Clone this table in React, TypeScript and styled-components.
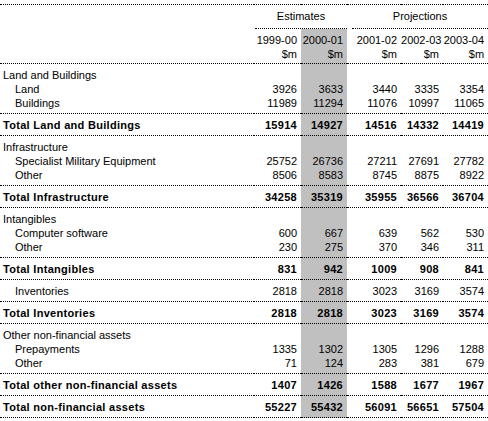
import React from 'react';
import styled, { createGlobalStyle } from 'styled-components';

const GlobalStyle = createGlobalStyle`
  html, body {
    margin: 0;
    padding: 0;
    background: #ffffff;
  }
  body {
    font-family: Tahoma, "Liberation Sans", Arial, sans-serif;
    font-size: 11px;
    color: #000000;
  }
`;

const SHADE = '#c0c0c0';
const RULE = '1px dotted #000000';

type Values = number[];

interface Group {
  heading?: string;
  items: { label: string; values: Values }[];
  total: { label: string; values: Values };
}

const groups: Group[] = [
  {
    heading: 'Land and Buildings',
    items: [
      { label: 'Land', values: [3926, 3633, 3440, 3335, 3354] },
      { label: 'Buildings', values: [11989, 11294, 11076, 10997, 11065] },
    ],
    total: { label: 'Total Land and Buildings', values: [15914, 14927, 14516, 14332, 14419] },
  },
  {
    heading: 'Infrastructure',
    items: [
      { label: 'Specialist Military Equipment', values: [25752, 26736, 27211, 27691, 27782] },
      { label: 'Other', values: [8506, 8583, 8745, 8875, 8922] },
    ],
    total: { label: 'Total Infrastructure', values: [34258, 35319, 35955, 36566, 36704] },
  },
  {
    heading: 'Intangibles',
    items: [
      { label: 'Computer software', values: [600, 667, 639, 562, 530] },
      { label: 'Other', values: [230, 275, 370, 346, 311] },
    ],
    total: { label: 'Total Intangibles', values: [831, 942, 1009, 908, 841] },
  },
  {
    items: [{ label: 'Inventories', values: [2818, 2818, 3023, 3169, 3574] }],
    total: { label: 'Total Inventories', values: [2818, 2818, 3023, 3169, 3574] },
  },
  {
    heading: 'Other non-financial assets',
    items: [
      { label: 'Prepayments', values: [1335, 1302, 1305, 1296, 1288] },
      { label: 'Other', values: [71, 124, 283, 381, 679] },
    ],
    total: { label: 'Total other non-financial assets', values: [1407, 1426, 1588, 1677, 1967] },
  },
];

const grandTotal = { label: 'Total non-financial assets', values: [55227, 55432, 56091, 56651, 57504] };

const years = ['1999-00', '2000-01', '2001-02', '2002-03', '2003-04'];
// the estimate for the budget year is shaded
const SHADED_COL = 1;

const Sheet = styled.table`
  width: 488px;
  margin-top: 4px;
  border-collapse: collapse;
  table-layout: fixed;
  border-top: ${RULE};
  line-height: 14px;
`;

const Row = styled.tr<{ $rule?: boolean }>`
  border-bottom: ${(p) => (p.$rule ? RULE : 'none')};
`;

const Cell = styled.td<{
  $num?: boolean;
  $shade?: boolean;
  $bold?: boolean;
  $indent?: boolean;
  $pt?: number;
  $pb?: number;
}>`
  padding: ${(p) => p.$pt ?? 0}px 4px ${(p) => p.$pb ?? 0}px ${(p) => (p.$num ? 0 : p.$indent ? 15 : 3)}px;
  text-align: ${(p) => (p.$num ? 'right' : 'left')};
  font-weight: ${(p) => (p.$bold ? 700 : 400)};
  letter-spacing: ${(p) => (p.$bold ? '0.3px' : 'normal')};
  background: ${(p) => (p.$shade ? SHADE : 'transparent')};
  white-space: nowrap;
  vertical-align: top;
`;

const GroupCaption = styled.div<{ $gap?: number }>`
  margin-left: ${(p) => p.$gap ?? 0}px;
  padding: 4px 0 5px;
  border-bottom: ${RULE};
  text-align: center;
`;

const HeadCell = styled.th`
  padding: 0;
  font-weight: 400;
  vertical-align: bottom;
`;

const DataRow = ({
  label,
  values,
  bold,
  indent,
  pt,
  pb,
  rule,
}: {
  label: string;
  values: Values;
  bold?: boolean;
  indent?: boolean;
  pt?: number;
  pb?: number;
  rule?: boolean;
}) => (
  <Row $rule={rule}>
    <Cell $bold={bold} $indent={indent} $pt={pt} $pb={pb}>
      {label}
    </Cell>
    {values.map((v, i) => (
      <Cell key={i} $num $bold={bold} $shade={i === SHADED_COL} $pt={pt} $pb={pb}>
        {v}
      </Cell>
    ))}
  </Row>
);

const EmptyNums = ({ pt }: { pt?: number }) => (
  <>
    {years.map((y, i) => (
      <Cell key={y} $num $shade={i === SHADED_COL} $pt={pt} />
    ))}
  </>
);

export default function App() {
  return (
    <>
      <GlobalStyle />
      <Sheet>
        <colgroup>
          <col style={{ width: 254 }} />
          <col style={{ width: 47 }} />
          <col style={{ width: 46 }} />
          <col style={{ width: 54 }} />
          <col style={{ width: 42 }} />
          <col style={{ width: 45 }} />
        </colgroup>
        <thead>
          <tr>
            <HeadCell />
            <HeadCell colSpan={2}>
              <GroupCaption $gap={1}>Estimates</GroupCaption>
            </HeadCell>
            <HeadCell colSpan={3}>
              <GroupCaption $gap={5}>Projections</GroupCaption>
            </HeadCell>
          </tr>
          <Row $rule>
            <Cell />
            {years.map((y, i) => (
              <Cell key={y} $num $shade={i === SHADED_COL} $pt={4} $pb={2}>
                {y}
                <br />
                $m
              </Cell>
            ))}
          </Row>
        </thead>
        <tbody>
          {groups.map((g) => {
            const rows = g.items.length + (g.heading ? 1 : 0);
            return (
              <React.Fragment key={g.total.label}>
                {g.heading && (
                  <tr>
                    <Cell $pt={4}>{g.heading}</Cell>
                    <EmptyNums pt={4} />
                  </tr>
                )}
                {g.items.map((it, idx) => {
                  const pos = idx + (g.heading ? 1 : 0);
                  return (
                    <DataRow
                      key={it.label + idx}
                      label={it.label}
                      values={it.values}
                      indent
                      pt={pos === 0 ? 4 : 0}
                      pb={pos === rows - 1 ? 3 : 0}
                      rule={pos === rows - 1}
                    />
                  );
                })}
                <DataRow label={g.total.label} values={g.total.values} bold pt={4} pb={3} rule />
              </React.Fragment>
            );
          })}
          <DataRow label={grandTotal.label} values={grandTotal.values} bold pt={4} pb={3} rule />
        </tbody>
      </Sheet>
    </>
  );
}
